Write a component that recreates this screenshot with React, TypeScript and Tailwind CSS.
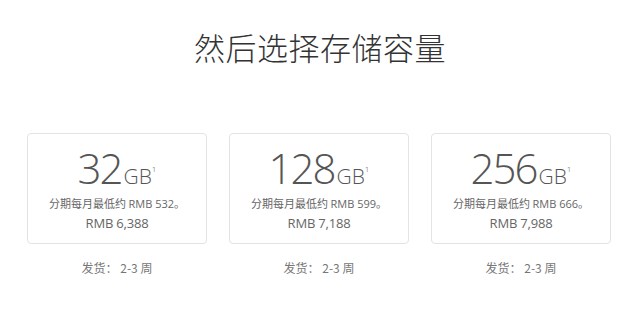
const plans = [
  { size: "32", monthly: "532", price: "6,388" },
  { size: "128", monthly: "599", price: "7,188" },
  { size: "256", monthly: "666", price: "7,988" },
]

const cjk = { fontFamily: '"Noto Sans CJK SC", "Noto Sans", sans-serif' }
const latin = { fontFamily: '"Open Sans", "Noto Sans CJK SC", sans-serif' }

function PlanCard({ size, monthly, price }: { size: string; monthly: string; price: string }) {
  return (
    <div className="flex h-[111px] w-[180px] flex-col items-center rounded-[4px] border border-[#e3e3e3] pt-[13px]">
      <div className="flex items-baseline text-[#555]" style={latin}>
        <span className="text-[42px] font-light leading-none tracking-[-2px]">{size}</span>
        <span className="ml-[2px] text-[21px] font-light leading-none">GB</span>
        <span className="relative top-[-12px] text-[8px] font-light leading-none">1</span>
      </div>
      <div className="mt-[7px] text-[11px] leading-[14px] text-[#666]" style={cjk}>
        分期每月最低约 <span style={latin}>RMB {monthly}</span>。
      </div>
      <div className="mt-[4px] text-[13px] leading-[16px] tracking-[-0.2px] text-[#666]" style={latin}>
        RMB {price}
      </div>
    </div>
  )
}

export default function App() {
  return (
    <div className="h-[312px] w-[640px] overflow-hidden bg-white">
      <h1 className="pt-[31px] text-center text-[31px] font-light leading-none tracking-[0.5px] text-[#333]" style={cjk}>
        然后选择存储容量
      </h1>

      <div className="mt-[71px] flex gap-[22px] pl-[27px]">
        {plans.map((p) => (
          <PlanCard key={p.size} {...p} />
        ))}
      </div>

      <div className="mt-[17px] flex gap-[22px] pl-[27px]">
        {plans.map((p) => (
          <div key={p.size} className="w-[180px] text-center text-[12px] leading-[14px] text-[#777]" style={cjk}>
            发货： 2-3 周
          </div>
        ))}
      </div>
    </div>
  )
}
